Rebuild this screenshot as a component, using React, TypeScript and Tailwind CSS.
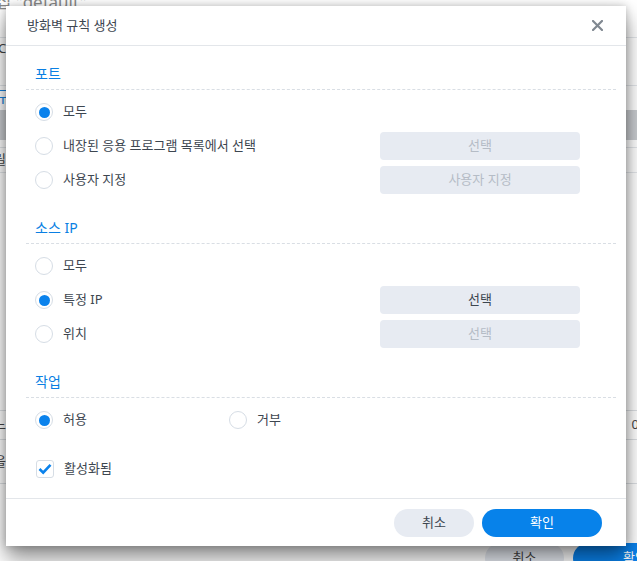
import React, { useState } from "react";

const font = "font-['Noto_Sans','Noto_Sans_CJK_KR',sans-serif]";

interface RadioProps {
  checked: boolean;
  label: string;
  onClick: () => void;
}

const Radio: React.FC<RadioProps> = ({ checked, label, onClick }) => (
  <button onClick={onClick} className="flex items-center gap-[10px] pl-[9px] text-left">
    <span className="w-[18px] h-[18px] rounded-full border-[1.5px] border-[#d6dde5] bg-white flex items-center justify-center shrink-0">
      {checked && <span className="w-[11px] h-[11px] rounded-full bg-[#0a82ec]" />}
    </span>
    <span className="text-[13px] text-[#3d4650]">{label}</span>
  </button>
);

const SideButton = ({ label, disabled }: { label: string; disabled?: boolean }) => (
  <button
    className={
      "w-[200px] h-[28px] rounded-[4px] bg-[#e7ebf2] text-[13px] " +
      (disabled ? "text-[#b5bcc6]" : "text-[#3d4650]")
    }
  >
    {label}
  </button>
);

const SectionTitle = ({ title, first }: { title: string; first?: boolean }) => (
  <div className={first ? "pt-[13px]" : "pt-[16px]"}>
    <div className="h-[31px] flex items-center pl-[9px] pb-[1px] text-[14px] text-[#0a7fe3] border-b border-dashed border-[#d9dee4]">
      {title}
    </div>
  </div>
);

const Row = ({ children }: { children: React.ReactNode }) => (
  <div className="h-[34px] flex items-center">{children}</div>
);

export default function App() {
  const [port, setPort] = useState(0);
  const [source, setSource] = useState(1);
  const [action, setAction] = useState(0);
  const [enabled, setEnabled] = useState(true);

  return (
    <div className={"relative w-[637px] h-[561px] overflow-hidden bg-white " + font}>
      {/* page behind the dialog */}
      <div className="flex flex-col text-[#444]">
        <div className="h-[20px] -mt-[8px] -ml-[20px] text-[17px] text-[#8a8a8a] leading-[20px]">편집 "default"</div>
        <div className="h-[26px] border-b border-[#e3e6ea]" />
        <div className="h-[22px] flex items-center text-[13px] -ml-[2px]">C</div>
        <div className="h-[26px] border-b border-[#e3e6ea]" />
        <div className="h-[20px] flex items-center text-[15px] text-[#1a84e0] -ml-[4px]">구</div>
        <div className="h-[30px] bg-[#c9ccd0] mt-[4px]" />
        <div className="h-[8px] border-b border-[#e3e6ea]" />
        <div className="h-[24px] flex items-center text-[13px] -ml-[6px]">릴</div>
        <div className="h-[238px] border-t border-[#e3e6ea]" />
        <div className="h-[30px] border-y border-[#dcdfe3] flex items-center justify-between text-[13px]">
          <span className="-ml-[6px]">느</span>
          <span className="-mr-[2px]">0</span>
        </div>
        <div className="h-[44px] border-b border-[#dcdfe3] flex items-center text-[13px]">
          <span className="-ml-[6px]">을</span>
        </div>
        <div className="flex justify-end gap-[9px] pt-[59px] -mr-[14px]">
          <div className="w-[79px] h-[30px] rounded-full bg-[#e7ebf2] flex items-center justify-center text-[13px]">취소</div>
          <div className="w-[78px] h-[30px] rounded-full bg-[#0a82ec] text-white flex items-center justify-start pl-[50px] text-[13px]">확인</div>
        </div>
      </div>

      {/* dialog */}
      <div className="absolute left-[6px] top-[6px] w-[620px] h-[540px] bg-white shadow-[0_12px_20px_rgba(0,0,0,0.45),0_0_8px_rgba(0,0,0,0.22)] flex flex-col">
        <div className="h-[40px] shrink-0 flex items-center justify-between pl-[21px] pr-[23px] border-b border-[#e3e6ea]">
          <span className="text-[13px] text-[#3d4650]">방화벽 규칙 생성</span>
          <button className="text-[#808891]">
            <svg width="11" height="11" viewBox="0 0 11 11">
              <path d="M1 1L10 10M10 1L1 10" stroke="currentColor" strokeWidth="2.2" strokeLinecap="square" />
            </svg>
          </button>
        </div>

        <div className="flex-1 pl-[20px] pr-[10px]">
          <SectionTitle title="포트" first />
          <div className="pt-[5px]">
            <Row>
              <div className="w-[354px]">
                <Radio checked={port === 0} label="모두" onClick={() => setPort(0)} />
              </div>
            </Row>
            <Row>
              <div className="w-[354px]">
                <Radio checked={port === 1} label="내장된 응용 프로그램 목록에서 선택" onClick={() => setPort(1)} />
              </div>
              <SideButton label="선택" disabled={port !== 1} />
            </Row>
            <Row>
              <div className="w-[354px]">
                <Radio checked={port === 2} label="사용자 지정" onClick={() => setPort(2)} />
              </div>
              <SideButton label="사용자 지정" disabled={port !== 2} />
            </Row>
          </div>

          <SectionTitle title="소스 IP" />
          <div className="pt-[5px]">
            <Row>
              <div className="w-[354px]">
                <Radio checked={source === 0} label="모두" onClick={() => setSource(0)} />
              </div>
            </Row>
            <Row>
              <div className="w-[354px]">
                <Radio checked={source === 1} label="특정 IP" onClick={() => setSource(1)} />
              </div>
              <SideButton label="선택" disabled={source !== 1} />
            </Row>
            <Row>
              <div className="w-[354px]">
                <Radio checked={source === 2} label="위치" onClick={() => setSource(2)} />
              </div>
              <SideButton label="선택" disabled={source !== 2} />
            </Row>
          </div>

          <SectionTitle title="작업" />
          <div className="pt-[5px]">
            <Row>
              <div className="w-[194px]">
                <Radio checked={action === 0} label="허용" onClick={() => setAction(0)} />
              </div>
              <Radio checked={action === 1} label="거부" onClick={() => setAction(1)} />
            </Row>
          </div>

          <div className="pt-[15px]">
            <Row>
              <button onClick={() => setEnabled(!enabled)} className="flex items-center gap-[10px] pl-[10px]">
                <span className="w-[18px] h-[18px] rounded-[3px] border-[1.5px] border-[#d6dde5] flex items-center justify-center">
                  {enabled && (
                    <svg width="14" height="12" viewBox="0 0 14 12">
                      <path d="M1.5 6L5.2 9.7L12.5 1.8" fill="none" stroke="#0a82ec" strokeWidth="2.6" />
                    </svg>
                  )}
                </span>
                <span className="text-[13px] text-[#3d4650]">활성화됨</span>
              </button>
            </Row>
          </div>
        </div>

        <div className="h-[48px] shrink-0 border-t border-[#e3e6ea] flex items-center justify-end gap-[8px] pr-[24px]">
          <button className="w-[80px] h-[28px] rounded-full bg-[#e7ebf2] text-[13px] text-[#3d4650]">취소</button>
          <button className="w-[120px] h-[28px] rounded-full bg-[#0782ea] text-[13px] text-white">확인</button>
        </div>
      </div>
    </div>
  );
}
